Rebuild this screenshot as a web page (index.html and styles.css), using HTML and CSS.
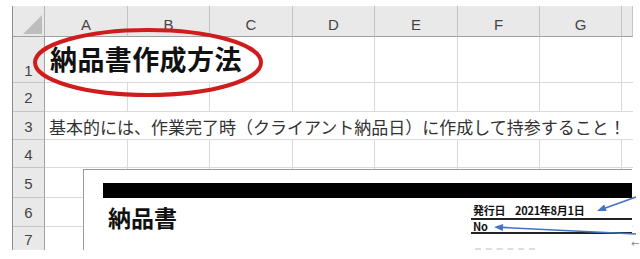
FILE: index.html
```html
<!DOCTYPE html>
<html lang="ja">
<head>
<meta charset="utf-8">
<title>納品書作成方法</title>
<link rel="stylesheet" href="styles.css">
</head>
<body>
<div class="page">
  <div class="sheet">
    <div class="corner"><svg width="31" height="30" viewBox="0 0 31 30"><polygon points="10,28 29,28 29,9" fill="#bdbdbd"/></svg></div>
    <div class="colh">A</div><div class="colh">B</div><div class="colh">C</div><div class="colh">D</div>
    <div class="colh">E</div><div class="colh">F</div><div class="colh">G</div><div class="colh last"></div>

    <div class="rowh bottom">1</div>
    <div class="c title span3">納品書作成方法</div>
    <div class="c"></div><div class="c"></div><div class="c"></div><div class="c"></div><div class="c last"></div>

    <div class="rowh">2</div>
    <div class="c"></div><div class="c"></div><div class="c"></div><div class="c"></div>
    <div class="c"></div><div class="c"></div><div class="c"></div><div class="c last"></div>

    <div class="rowh">3</div>
    <div class="c note spanall">基本的には、作業完了時（クライアント納品日）に作成して持参すること！</div>

    <div class="rowh">4</div>
    <div class="c"></div><div class="c"></div><div class="c"></div><div class="c"></div>
    <div class="c"></div><div class="c"></div><div class="c"></div><div class="c last"></div>

    <div class="rowh">5</div>
    <div class="c"></div><div class="c"></div><div class="c"></div><div class="c"></div>
    <div class="c"></div><div class="c"></div><div class="c"></div><div class="c last"></div>

    <div class="rowh">6</div>
    <div class="c"></div><div class="c"></div><div class="c"></div><div class="c"></div>
    <div class="c"></div><div class="c"></div><div class="c"></div><div class="c last"></div>

    <div class="rowh end">7</div>
    <div class="c end"></div><div class="c end"></div><div class="c end"></div><div class="c end"></div>
    <div class="c end"></div><div class="c end"></div><div class="c end"></div><div class="c end last"></div>
  </div>

  <!-- pasted picture of the invoice -->
  <div class="shot">
    <div class="bar"></div>
    <div class="shot-body">
      <div class="shot-title">納品書</div>
      <div class="meta">
        <div class="meta-row first">発行日<span class="date">2021年8月1日</span></div>
        <div class="meta-row">No</div>
        <div class="meta-faint"></div>
      </div>
    </div>
  </div>
  <div class="back">←</div>

  <svg class="marks" width="640" height="259" viewBox="0 0 640 259">
    <ellipse cx="148" cy="62.5" rx="113" ry="32.5" fill="none" stroke="#d01c1c" stroke-width="4"/>
    <line x1="636" y1="197" x2="604" y2="208.5" stroke="#4472c4" stroke-width="1.6"/>
    <polygon points="597,211 606.6,211.1 604.2,204.5" fill="#4472c4"/>
    <line x1="636" y1="234" x2="502" y2="227.4" stroke="#4472c4" stroke-width="1.6"/>
    <polygon points="494,227 503.2,224 502.8,231" fill="#4472c4"/>
  </svg>
</div>
</body>
</html>
```

FILE: styles.css
```css
body{
	margin:0;
	background:#fff;
}
.page{
	position:relative;
	width:640px;
	height:259px;
	overflow:hidden;
}
.sheet{
	display:grid;
	grid-template-columns:32px 83px 82px 83px 82px 83px 82px 82px 11px;
	grid-template-rows:31px 46px 29px 28px 28px 30px 29px 23px;
	margin:6px 0 0 12px;
	width:620px;
	border-left:1px solid #8e8e8e;
	box-sizing:border-box;
	font-family:"Liberation Sans","Noto Sans CJK JP",sans-serif;
	color:#444;
}
.sheet > div{
	box-sizing:border-box;
}
.corner{
	background:#e9e9e9;
	border-right:1px solid #b4b4b4;
	border-bottom:1px solid #a0a0a0;
}
.corner svg{
	display:block;
}
.colh{
	background:#e9e9e9;
	border-right:1px solid #c4c4c4;
	border-bottom:1px solid #a0a0a0;
	font-size:15px;
	text-align:center;
	padding-top:10px;
	line-height:17px;
}
.rowh{
	background:#e9e9e9;
	border-right:1px solid #a0a0a0;
	border-bottom:1px solid #c4c4c4;
	font-size:15px;
	display:flex;
	align-items:center;
	justify-content:center;
	padding-top:1px;
}
.rowh.bottom{
	align-items:flex-end;
	padding-bottom:3px;
}
.c{
	border-right:1px solid #dadada;
	border-bottom:1px solid #dadada;
	background:#fff;
}
.c.last{
	border-right:none;
}
.end{
	border-bottom:none !important;
}
.span3{
	grid-column:span 3;
}
.spanall{
	grid-column:span 8;
	border-right:none;
}
.title{
	font-family:"Noto Sans CJK JP",sans-serif;
	font-size:27px;
	font-weight:bold;
	letter-spacing:0.4px;
	color:#111;
	white-space:nowrap;
	display:flex;
	align-items:center;
	padding:0 0 2px 5px;
}
.note{
	font-family:"Noto Sans CJK JP",sans-serif;
	font-size:17px;
	color:#333;
	white-space:nowrap;
	display:flex;
	align-items:center;
	padding:1px 0 0 4px;
}
.shot{
	position:absolute;
	left:83px;
	top:169px;
	width:549px;
	height:81px;
	box-sizing:border-box;
	background:#fff;
	border-left:1px solid #9a9a9a;
	border-top:1px solid #9a9a9a;
	padding:13px 0 0 19px;
	font-family:"Noto Sans CJK JP",sans-serif;
	color:#111;
	overflow:hidden;
}
.bar{
	height:15px;
	background:#000;
}
.shot-body{
	display:flex;
}
.shot-title{
	font-size:23px;
	font-weight:bold;
	line-height:28px;
	margin:5px 0 0 5px;
}
.meta{
	margin-left:auto;
	width:161px;
	margin-top:5px;
}
.meta-row{
	font-size:11px;
	font-weight:bold;
	letter-spacing:-0.3px;
	line-height:12px;
	padding-left:2px;
	border-bottom:2px solid #222;
}
.meta-row.first{
	line-height:15px;
}
.date{
	margin-left:10px;
}
.meta-faint{
	margin:14px 0 0 4px;
	width:60px;
	border-top:2px dashed #dedede;
}
.back{
	position:absolute;
	left:631px;
	top:238px;
	font-family:"DejaVu Sans",sans-serif;
	font-size:10px;
	color:#888;
}
.marks{
	position:absolute;
	left:0;
	top:0;
	pointer-events:none;
}
```
